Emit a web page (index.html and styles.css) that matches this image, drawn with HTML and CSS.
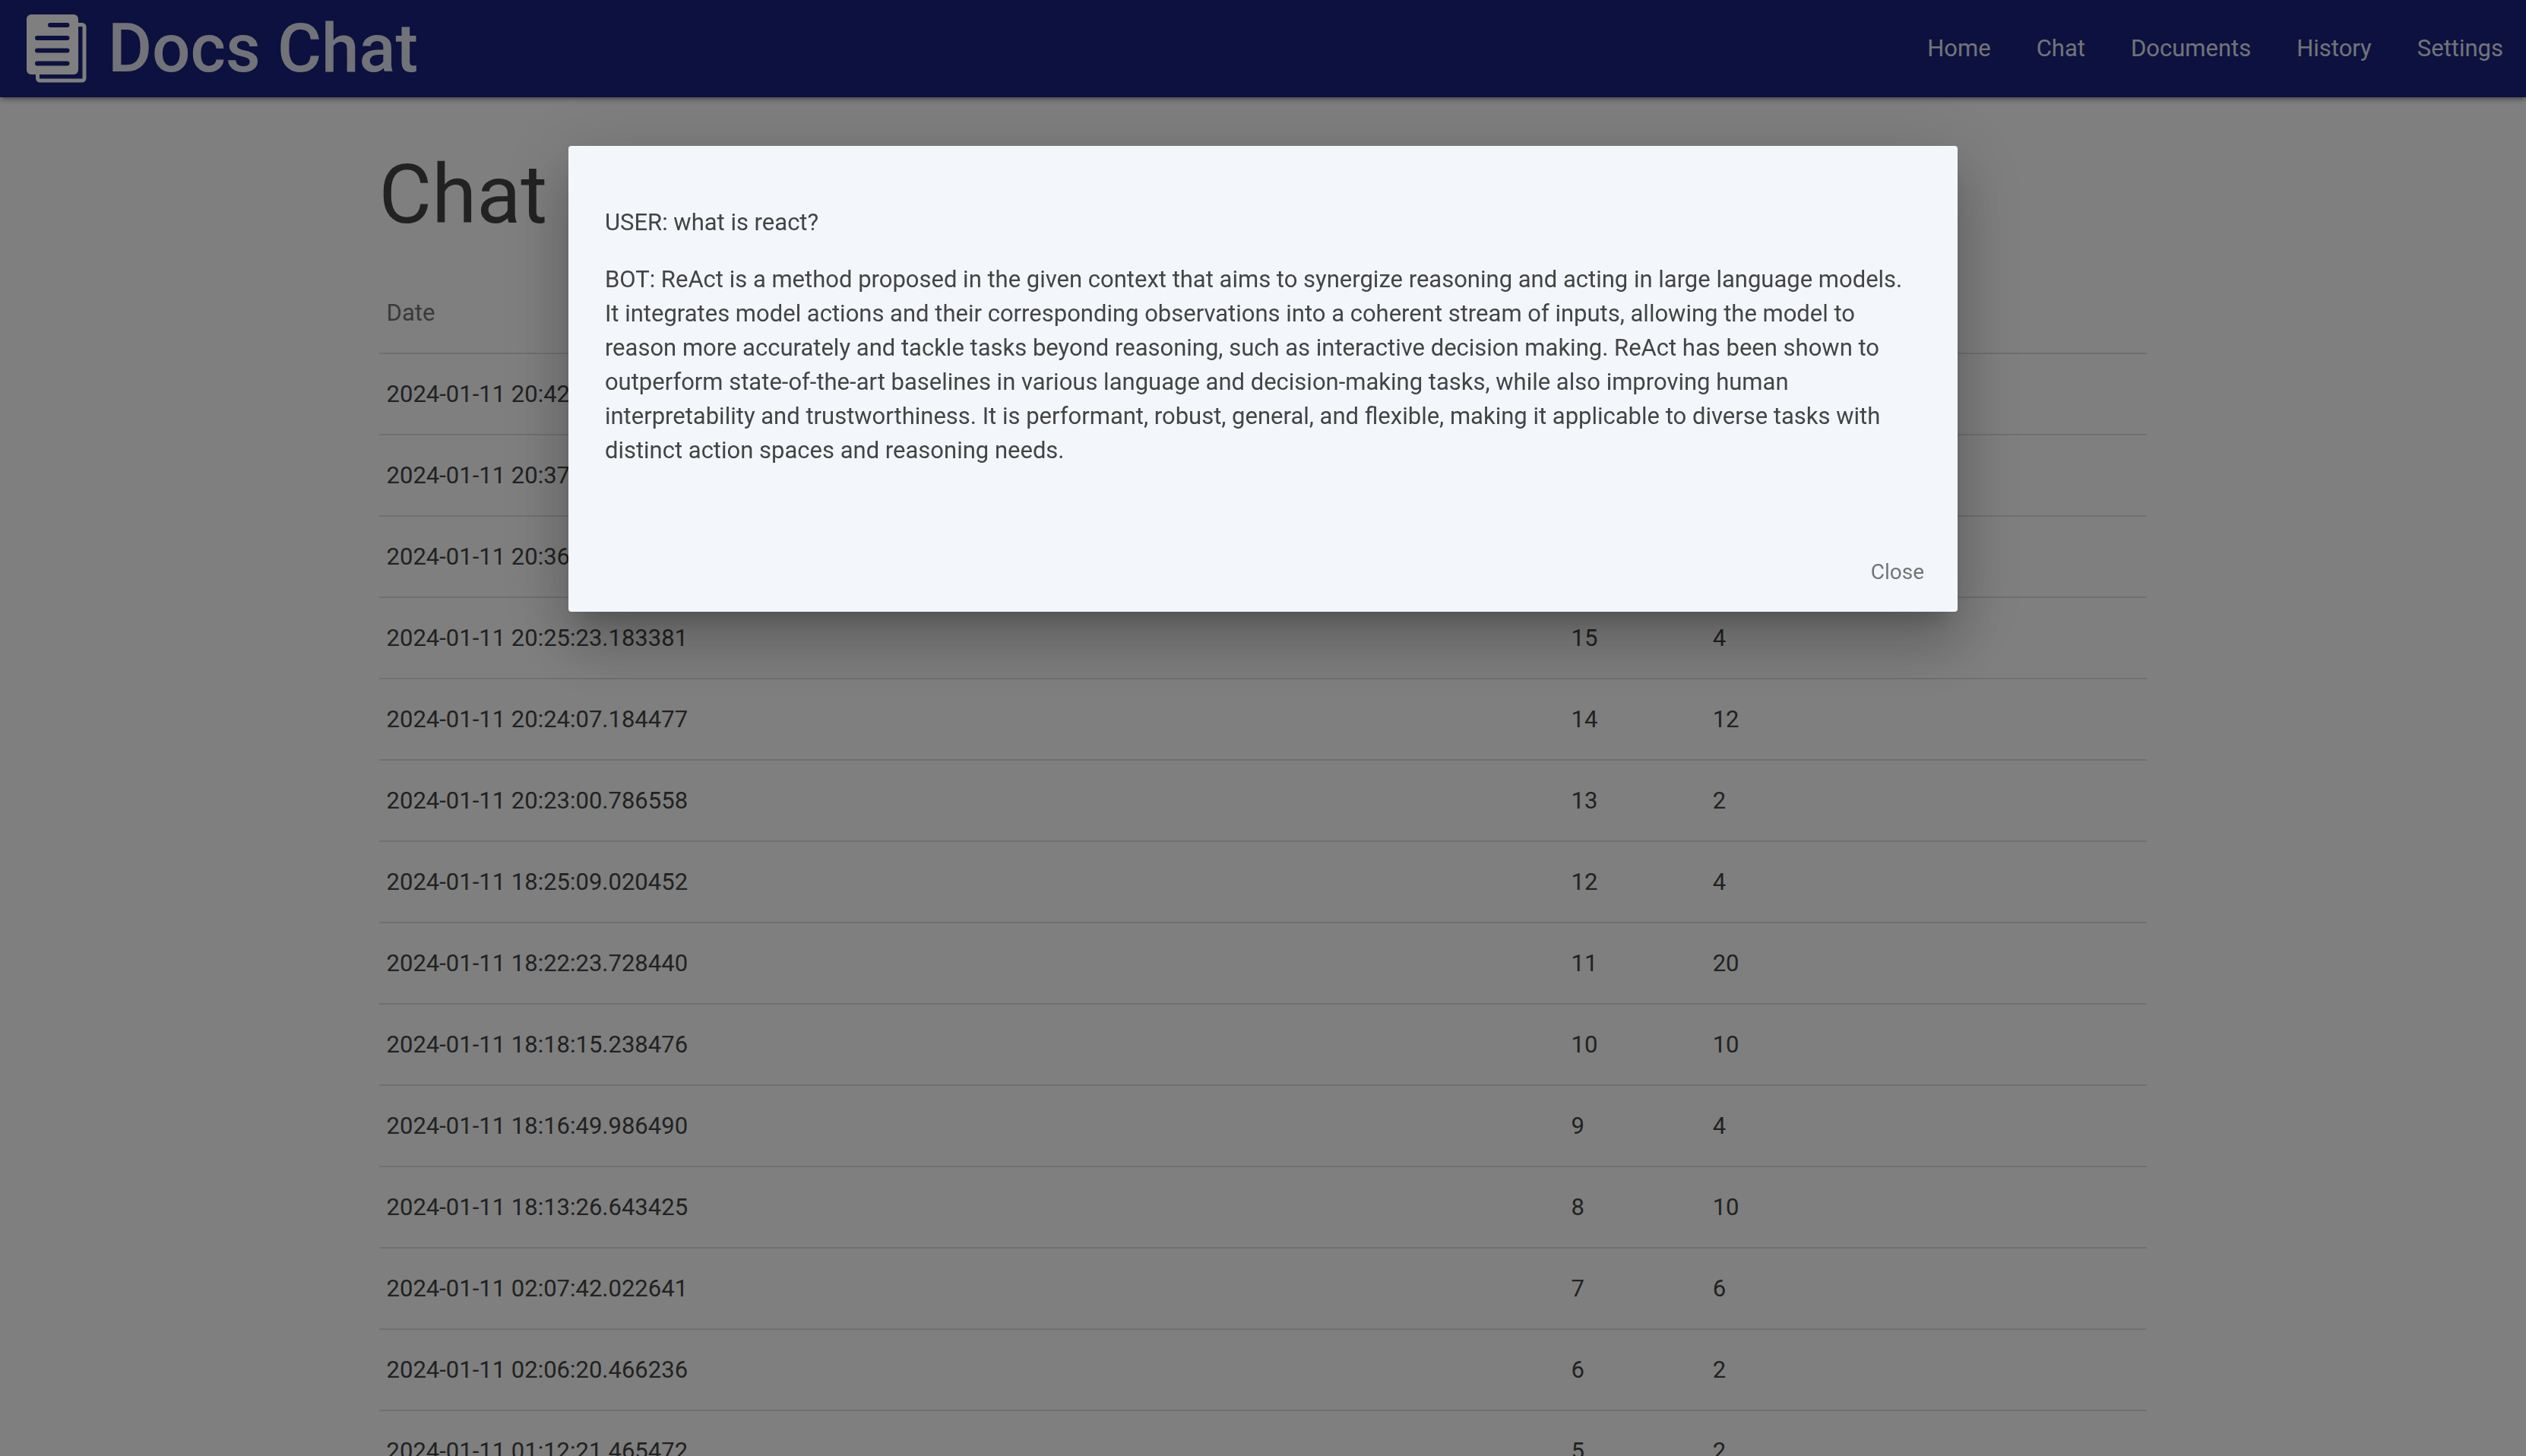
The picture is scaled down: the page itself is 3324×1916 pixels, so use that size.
FILE: index.html
```html
<!DOCTYPE html>
<html lang="en">
<head>
<meta charset="utf-8">
<title>Docs Chat</title>
<link rel="stylesheet" href="styles.css">
</head>
<body>
<header class="navbar">
  <a class="brand" href="#">
    <svg class="brand-icon" viewBox="0 0 80 90" aria-hidden="true">
      <rect class="sheet-back" x="15.5" y="13.5" width="61.5" height="73.5" rx="3"/>
      <rect class="sheet-front" x="1" y="0" width="68" height="79" rx="6"/>
      <path class="sheet-lines" d="M32 14h22.500M15 31h39.500M15 47.500h39.500M15 64.500h39.500"/>
    </svg>
    <span class="brand-name">Docs Chat</span>
  </a>
  <nav class="menu">
    <a href="#">Home</a>
    <a href="#">Chat</a>
    <a href="#">Documents</a>
    <a href="#">History</a>
    <a href="#">Settings</a>
  </nav>
</header>
<main class="container">
  <h1 class="title">Chat</h1>
  <table class="history">
    <colgroup><col class="col-date"><col class="col-id"><col class="col-count"></colgroup>
    <thead><tr><th scope="col">Date</th><th></th><th></th></tr></thead>
    <tbody>
      <tr><td>2024-01-11 20:42</td><td></td><td></td></tr>
      <tr><td>2024-01-11 20:37</td><td></td><td></td></tr>
      <tr><td>2024-01-11 20:36</td><td></td><td></td></tr>
      <tr><td>2024-01-11 20:25:23.183381</td><td>15</td><td>4</td></tr>
      <tr><td>2024-01-11 20:24:07.184477</td><td>14</td><td>12</td></tr>
      <tr><td>2024-01-11 20:23:00.786558</td><td>13</td><td>2</td></tr>
      <tr><td>2024-01-11 18:25:09.020452</td><td>12</td><td>4</td></tr>
      <tr><td>2024-01-11 18:22:23.728440</td><td>11</td><td>20</td></tr>
      <tr><td>2024-01-11 18:18:15.238476</td><td>10</td><td>10</td></tr>
      <tr><td>2024-01-11 18:16:49.986490</td><td>9</td><td>4</td></tr>
      <tr><td>2024-01-11 18:13:26.643425</td><td>8</td><td>10</td></tr>
      <tr><td>2024-01-11 02:07:42.022641</td><td>7</td><td>6</td></tr>
      <tr><td>2024-01-11 02:06:20.466236</td><td>6</td><td>2</td></tr>
      <tr><td>2024-01-11 01:12:21.465472</td><td>5</td><td>2</td></tr>
    </tbody>
  </table>
</main>
<div class="overlay">
  <section class="modal" role="dialog" aria-modal="true" aria-label="Conversation">
    <div class="modal-content">
      <p>USER: what is react?</p>
      <p>BOT: ReAct is a method proposed in the given context that aims to synergize reasoning and acting in large language models.<br>
      It integrates model actions and their corresponding observations into a coherent stream of inputs, allowing the model to<br>
      reason more accurately and tackle tasks beyond reasoning, such as interactive decision making. ReAct has been shown to<br>
      outperform state-of-the-art baselines in various language and decision-making tasks, while also improving human<br>
      interpretability and trustworthiness. It is performant, robust, general, and flexible, making it applicable to diverse tasks with<br>
      distinct action spaces and reasoning needs.</p>
    </div>
    <footer class="modal-footer"><button class="close" type="button">Close</button></footer>
  </section>
</div>
</body>
</html>
```
FILE: styles.css
```css
* {
  box-sizing: border-box;
}

body {
  height: 100vh;
  margin: 0;
  overflow: hidden;
  background: #fff;
  color: #444;
  font: 31px/45px Roboto, "Liberation Sans", sans-serif;
}

.navbar {
  position: relative;
  display: flex;
  align-items: center;
  justify-content: space-between;
  height: 128px;
  padding-left: 34px;
  background: #1a237e;
  box-shadow: 0 4px 4px rgba(0, 0, 0, .14), 0 6px 2px -4px rgba(0, 0, 0, .12), 0 2px 10px rgba(0, 0, 0, .2);
}

.navbar a {
  color: #e4e6f2;
  text-decoration: none;
}

.brand {
  display: flex;
  align-items: center;
  gap: 28px;
}

.brand-icon {
  width: 80px;
  height: 90px;
}

.sheet-back {
  fill: none;
  stroke: #fff;
  stroke-width: 5;
}

.sheet-front {
  fill: #fff;
}

.sheet-lines {
  fill: none;
  stroke: #1a237e;
  stroke-width: 6;
  stroke-linecap: round;
}

.brand-name {
  font-size: 89px;
  font-weight: 500;
  line-height: 128px;
}

.menu {
  display: flex;
}

.menu a {
  padding: 0 30px;
  line-height: 128px;
}

.container {
  width: 70%;
  margin: 0 auto;
}

.title {
  margin: 70px 0 42px;
  font-size: 107px;
  font-weight: 400;
  line-height: 118px;
}

.history {
  width: 100%;
  table-layout: fixed;
  border-collapse: collapse;
}

.col-date {
  width: 67%;
}

.col-id {
  width: 8%;
}

.col-count {
  width: 25%;
}

.history th,
.history td {
  height: 107px;
  padding: 30px 10px;
  border-bottom: 2px solid #e0e0e0;
  text-align: left;
}

.history th {
  color: #757575;
  font-weight: 400;
}

.overlay {
  position: fixed;
  inset: 0;
  display: flex;
  align-items: flex-start;
  justify-content: center;
  padding-top: 10vh;
  background: rgba(0, 0, 0, .5);
}

.modal {
  width: 55%;
  border-radius: 4px;
  background: #f3f6fb;
  box-shadow: 0 48px 76px 6px rgba(0, 0, 0, .14), 0 18px 92px 16px rgba(0, 0, 0, .12), 0 22px 30px -14px rgba(0, 0, 0, .2);
}

.modal-content {
  padding: 48px;
}

.modal-content p {
  margin: 30px 0;
}

.modal-footer {
  display: flex;
  justify-content: flex-end;
  padding: 24px 12px 16px;
}

.close {
  height: 72px;
  padding: 0 32px;
  border: 0;
  background: none;
  color: #757575;
  font: 28px/72px Roboto, "Liberation Sans", sans-serif;
}
```
